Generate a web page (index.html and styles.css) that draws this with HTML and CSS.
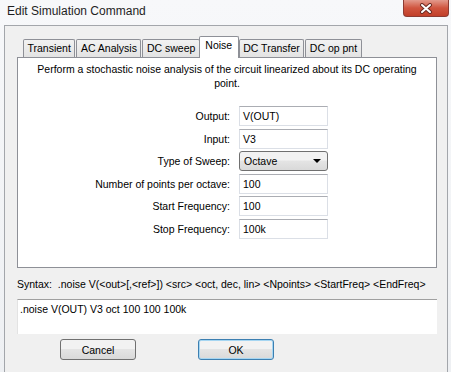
FILE: index.html
```html
<!DOCTYPE html>
<html lang="en">
<head>
    <meta charset="UTF-8">
    <title>Edit Simulation Command</title>
    <link rel="stylesheet" href="styles.css">
</head>
<body>

<div class="window">
    <div class="titlebar">
        <span class="title">Edit Simulation Command</span>
        <div class="close">
            <svg width="14" height="11" viewBox="0 0 14 11">
                <path d="M3 2 L11 9 M11 2 L3 9" stroke="#6b2a22" stroke-width="4" stroke-linecap="round"/>
                <path d="M3 2 L11 9 M11 2 L3 9" stroke="#ffffff" stroke-width="2" stroke-linecap="round"/>
            </svg>
        </div>
    </div>

    <div class="client">
        <div class="tabs">
            <div class="tab">Transient</div>
            <div class="tab">AC Analysis</div>
            <div class="tab">DC sweep</div>
            <div class="tab active">Noise</div>
            <div class="tab">DC Transfer</div>
            <div class="tab">DC op pnt</div>
        </div>

        <div class="panel">
            <p class="desc">Perform a stochastic noise analysis of the circuit linearized about its DC operating point.</p>

            <div class="form">
                <label>Output:</label>
                <div class="field">V(OUT)</div>
                <label>Input:</label>
                <div class="field">V3</div>
                <label>Type of Sweep:</label>
                <div class="select">
                    <span>Octave</span>
                    <span class="arrow"></span>
                </div>
                <label>Number of points per octave:</label>
                <div class="field">100</div>
                <label>Start Frequency:</label>
                <div class="field">100</div>
                <label>Stop Frequency:</label>
                <div class="field">100k</div>
            </div>
        </div>

        <div class="syntax">Syntax: &nbsp;.noise V(&lt;out&gt;[,&lt;ref&gt;]) &lt;src&gt; &lt;oct, dec, lin&gt; &lt;Npoints&gt; &lt;StartFreq&gt; &lt;EndFreq&gt;</div>

        <div class="command">.noise V(OUT) V3 oct 100 100 100k</div>

        <div class="buttons">
            <button class="btn">Cancel</button>
            <button class="btn default">OK</button>
        </div>
    </div>
</div>

</body>
</html>
```

FILE: styles.css
```css
body {
    margin: 0;
    font-family: "Liberation Sans", Arial, sans-serif;
    font-size: 10.5px;
    color: #000;
}

.window {
    width: 451px;
    height: 372px;
    background: linear-gradient(#f7f8fa, #eef0f3);
    overflow: hidden;
}

.titlebar {
    height: 25px;
    display: flex;
    justify-content: space-between;
    align-items: flex-start;
}

.title {
    font-size: 12px;
    color: #1e1e1e;
    padding: 4px 0 0 7px;
}

.close {
    width: 44px;
    height: 16px;
    margin-right: 2px;
    border: 1px solid #8d3b32;
    border-top: none;
    border-radius: 0 0 4px 4px;
    background: linear-gradient(#e39a8c, #d0553f 50%, #c13f29);
    display: flex;
    justify-content: center;
    align-items: center;
}

.client {
    box-sizing: border-box;
    width: 444px;
    height: 347px;
    margin-left: 4px;
    padding: 0 10px 0 12px;
    background: #f0f0f0;
    border: 1px solid #a3a6ab;
    border-bottom: none;
}

.tabs {
    display: flex;
    align-items: flex-end;
    height: 20px;
    margin-top: 11px;
    padding-left: 6px;
}

.tab {
    height: 17px;
    line-height: 17px;
    padding: 0 3.5px;
    margin-right: 1px;
    border: 1px solid #8e9097;
    border-bottom: none;
    background: linear-gradient(#f2f2f2, #e3e3e3);
    border-radius: 2px 2px 0 0;
}

.tab.active {
    position: relative;
    z-index: 1;
    height: 21px;
    line-height: 16px;
    margin: 0 0 -1px -2px;
    padding: 0 5.5px;
    background: #fff;
}

.panel {
    box-sizing: border-box;
    width: 420px;
    height: 211px;
    background: #fff;
    border: 1px solid #8e9097;
}

.desc {
    margin: 4px 0 0;
    padding: 0 14px;
    line-height: 14px;
    text-align: center;
}

.form {
    display: grid;
    grid-template-columns: 212px 89px;
    column-gap: 9px;
    row-gap: 2.6px;
    margin-top: 16px;
}

.form label {
    text-align: right;
    line-height: 20px;
}

.field, .select {
    box-sizing: border-box;
    height: 20px;
    line-height: 18px;
    padding-left: 3px;
    border: 1px solid #dbdfe6;
    border-top-color: #abadb3;
}

.select {
    display: flex;
    justify-content: space-between;
    align-items: center;
    padding: 0 6px 0 4px;
    border: 1px solid #707070;
    border-radius: 3px;
    background: linear-gradient(#f2f2f2 45%, #e4e4e4 50%, #d9d9d9);
}

.arrow {
    width: 0;
    height: 0;
    border-left: 4px solid transparent;
    border-right: 4px solid transparent;
    border-top: 4px solid #000;
}

.syntax {
    margin-top: 9px;
    line-height: 14px;
    white-space: nowrap;
}

.command {
    box-sizing: border-box;
    width: 420px;
    height: 35px;
    margin-top: 8px;
    padding: 3px 2px;
    background: #fff;
    border-top: 1px solid #a0a0a0;
    border-left: 1px solid #e3e3e3;
}

.buttons {
    display: flex;
    gap: 62px;
    margin-top: 5px;
    padding-left: 43px;
}

.btn {
    width: 76px;
    height: 21px;
    padding: 0;
    font-family: inherit;
    font-size: 10.5px;
    color: #000;
    border: 1px solid #707070;
    border-radius: 3px;
    background: linear-gradient(#f2f2f2 45%, #e4e4e4 50%, #d9d9d9);
}

.btn.default {
    border-color: #3c7fb1;
    box-shadow: inset 0 0 0 1px #a6d6f2;
}
```
